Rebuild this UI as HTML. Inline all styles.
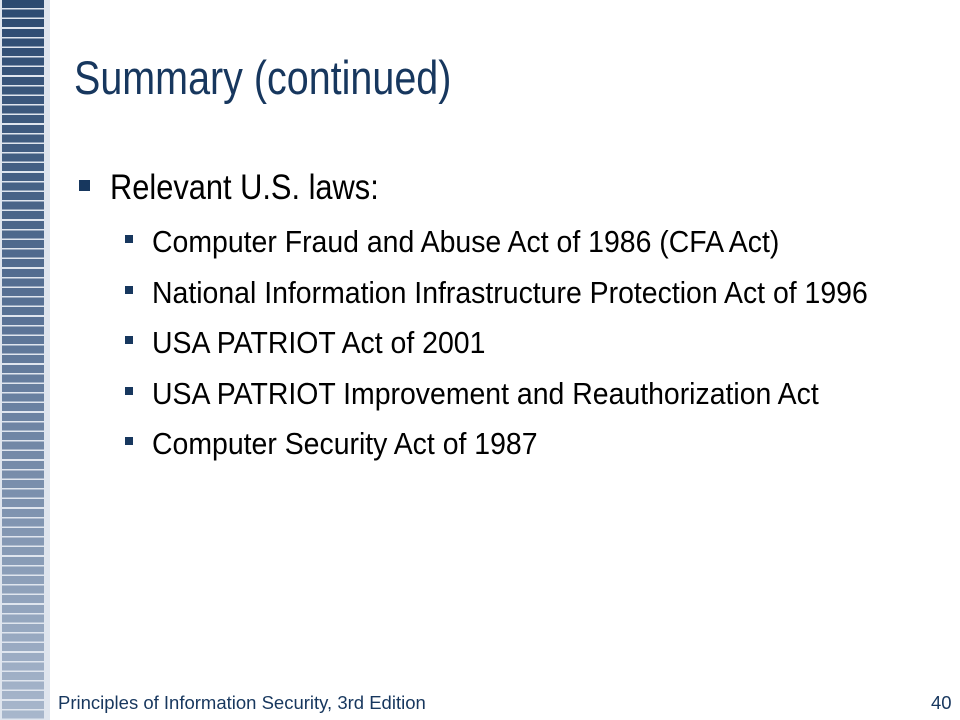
<!DOCTYPE html>
<html><head><meta charset="utf-8"><style>
html,body{margin:0;padding:0}
body{width:960px;height:720px;position:relative;overflow:hidden;background:#fff;font-family:"Liberation Sans",sans-serif;color:#000}
#bar{position:absolute;left:0;top:0;width:50px;height:720px;background:#dfe5ee}
#stripes{position:absolute;left:2px;top:0;width:42px;height:720px;
background:repeating-linear-gradient(to bottom,transparent 0,transparent 8px,#dfe5ee 8px,#dfe5ee 9.6px),linear-gradient(to bottom,#2c4a70 0%,#5a7396 45%,#a8b7cc 100%)}
.t{position:absolute;white-space:nowrap;transform-origin:0 0}
#title{left:74px;top:50px;font-size:47px;color:#17375e;transform:scaleX(0.84)}
.l1{left:110px;font-size:35px;transform:scaleX(0.88)}
.l2{left:152px;font-size:31px;transform:scaleX(0.917)}
.b1{position:absolute;left:79px;width:11px;height:11px;background:#17375e}
.b2{position:absolute;left:125px;width:8px;height:8px;background:#17375e}
.foot{font-size:18.5px;color:#17375e;top:692px}
</style></head><body>
<div id="bar"><div id="stripes"></div></div>
<div class="t" id="title">Summary (continued)</div>
<div class="b1" style="top:180px"></div>
<div class="t l1" style="top:168px">Relevant U.S. laws:</div>
<div class="b2" style="top:235px"></div>
<div class="t l2" style="top:224px">Computer Fraud and Abuse Act of 1986 (CFA Act)</div>
<div class="b2" style="top:286px"></div>
<div class="t l2" style="top:275px">National Information Infrastructure Protection Act of 1996</div>
<div class="b2" style="top:336px"></div>
<div class="t l2" style="top:325px">USA PATRIOT Act of 2001</div>
<div class="b2" style="top:387px"></div>
<div class="t l2" style="top:376px">USA PATRIOT Improvement and Reauthorization Act</div>
<div class="b2" style="top:437px"></div>
<div class="t l2" style="top:426px">Computer Security Act of 1987</div>
<div class="t foot" style="left:58px">Principles of Information Security, 3rd Edition</div>
<div class="t foot" style="left:931px">40</div>
</body></html>
